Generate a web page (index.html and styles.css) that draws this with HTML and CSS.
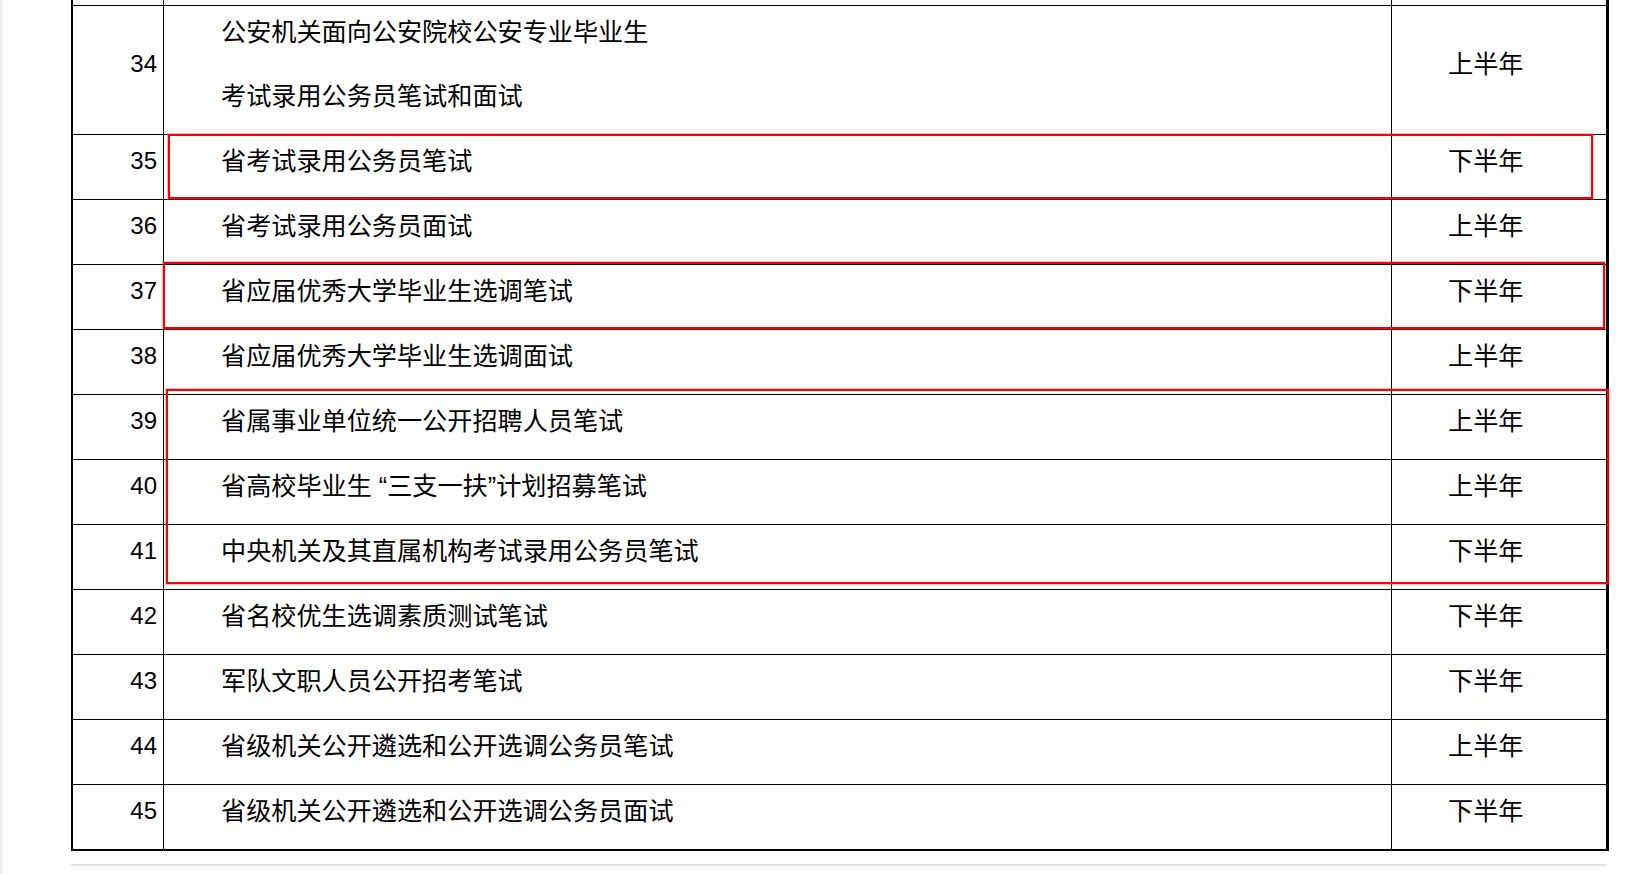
FILE: index.html
```html
<!DOCTYPE html>
<html lang="zh-CN">
<head>
<meta charset="utf-8">
<title>考试安排</title>
<link rel="stylesheet" href="styles.css">
</head>
<body>
<div class="page">
  <div class="tbl">
    <div class="row top"><div class="c1"></div><div class="c2"></div><div class="c3"></div></div>
    <div class="row">
      <div class="c1"><div class="v">34</div></div>
      <div class="c2"><div class="ln">公安机关面向公安院校公安专业毕业生</div><div class="ln">考试录用公务员笔试和面试</div></div>
      <div class="c3"><div class="v">上半年</div></div>
    </div>
    <div class="row">
      <div class="c1"><div class="v">35</div></div>
      <div class="c2"><div class="ln">省考试录用公务员笔试</div></div>
      <div class="c3"><div class="v">下半年</div></div>
    </div>
    <div class="row">
      <div class="c1"><div class="v">36</div></div>
      <div class="c2"><div class="ln">省考试录用公务员面试</div></div>
      <div class="c3"><div class="v">上半年</div></div>
    </div>
    <div class="row">
      <div class="c1"><div class="v">37</div></div>
      <div class="c2"><div class="ln">省应届优秀大学毕业生选调笔试</div></div>
      <div class="c3"><div class="v">下半年</div></div>
    </div>
    <div class="row">
      <div class="c1"><div class="v">38</div></div>
      <div class="c2"><div class="ln">省应届优秀大学毕业生选调面试</div></div>
      <div class="c3"><div class="v">上半年</div></div>
    </div>
    <div class="row">
      <div class="c1"><div class="v">39</div></div>
      <div class="c2"><div class="ln">省属事业单位统一公开招聘人员笔试</div></div>
      <div class="c3"><div class="v">上半年</div></div>
    </div>
    <div class="row">
      <div class="c1"><div class="v">40</div></div>
      <div class="c2"><div class="ln">省高校毕业生<span class="q"> “</span>三支一扶<span class="q">”</span>计划招募笔试</div></div>
      <div class="c3"><div class="v">上半年</div></div>
    </div>
    <div class="row">
      <div class="c1"><div class="v">41</div></div>
      <div class="c2"><div class="ln">中央机关及其直属机构考试录用公务员笔试</div></div>
      <div class="c3"><div class="v">下半年</div></div>
    </div>
    <div class="row">
      <div class="c1"><div class="v">42</div></div>
      <div class="c2"><div class="ln">省名校优生选调素质测试笔试</div></div>
      <div class="c3"><div class="v">下半年</div></div>
    </div>
    <div class="row">
      <div class="c1"><div class="v">43</div></div>
      <div class="c2"><div class="ln">军队文职人员公开招考笔试</div></div>
      <div class="c3"><div class="v">下半年</div></div>
    </div>
    <div class="row">
      <div class="c1"><div class="v">44</div></div>
      <div class="c2"><div class="ln">省级机关公开遴选和公开选调公务员笔试</div></div>
      <div class="c3"><div class="v">上半年</div></div>
    </div>
    <div class="row">
      <div class="c1"><div class="v">45</div></div>
      <div class="c2"><div class="ln">省级机关公开遴选和公开选调公务员面试</div></div>
      <div class="c3"><div class="v">下半年</div></div>
    </div>
  </div>
  <div class="rule"></div>
  <div class="mark m1"></div>
  <div class="mark m2"></div>
  <div class="mark m3"></div>
</div>
</body>
</html>
```
FILE: styles.css
```css
html, body {
  margin: 0;
  padding: 0;
  background: #fff;
}
.page {
  position: relative;
  height: 874px;
  padding-left: 71px;
  box-shadow: inset 3px 0 #f0f0f0;
  overflow: hidden;
  color: #000;
}
.tbl {
  width: 1538px;
  box-sizing: border-box;
  border-left: 2px solid #000;
  border-right: 3px solid #000;
  border-bottom: 2px solid #000;
}
.row {
  display: grid;
  grid-template-columns: 91px 1228px 214px;
}
.row > div {
  box-sizing: border-box;
  border-bottom: 1px solid #000;
  overflow: hidden;
}
.row:last-child > div {
  border-bottom: 0;
}
.top > div {
  height: 6px;
}
.c1, .c2 {
  border-right: 1px solid #000;
}
.c1 {
  display: flex;
  align-items: center;
  justify-content: flex-end;
  padding-right: 6px;
  font-family: "Liberation Sans", Arial, sans-serif;
  font-size: 24px;
}
.c1 .v {
  height: 52px;
  line-height: 52px;
  padding-bottom: 12px;
}
.c2 {
  padding-left: 57px;
  font-family: "Noto Sans CJK SC", sans-serif;
  font-size: 25.15px;
}
.c3 {
  display: flex;
  align-items: center;
  padding-left: 56px;
  font-family: "Noto Sans CJK SC", sans-serif;
  font-size: 25.15px;
}
.ln, .c3 .v {
  height: 48px;
  line-height: 48px;
  padding-bottom: 16px;
  white-space: nowrap;
}
.q {
  font-family: "Liberation Sans", Arial, sans-serif;
  line-height: 1;
  white-space: pre;
}
.rule {
  width: 1536px;
  height: 2px;
  margin-top: 13px;
  background: #e4e4e4;
}
.mark {
  position: absolute;
  box-sizing: border-box;
  border: 2px solid #ff0000;
  box-shadow: 0 0 0 1px rgba(255, 70, 70, 0.35);
}
.m1 { left: 168px; top: 134px; width: 1425px; height: 65px; }
.m2 { left: 163px; top: 262px; width: 1442px; height: 67px; }
.m3 { left: 166px; top: 389px; width: 1443px; height: 195px; }
```
